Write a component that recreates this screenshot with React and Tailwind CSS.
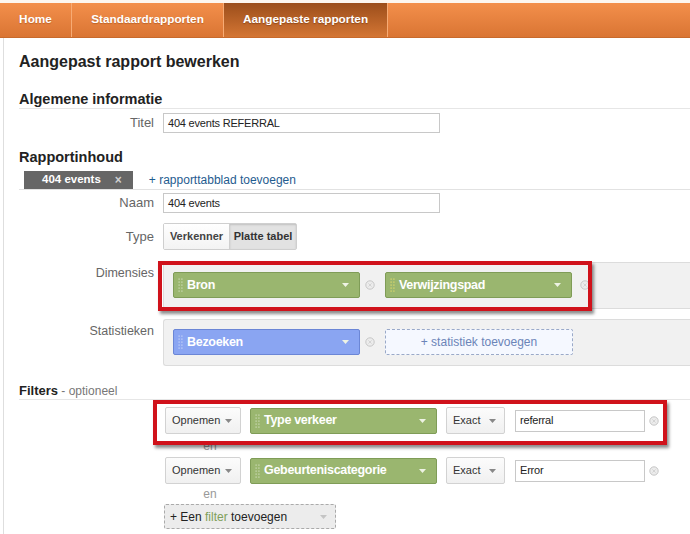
import React from 'react';

const RemoveIcon = () => (
  <svg width="10" height="10" viewBox="0 0 10 10" className="shrink-0">
    <circle cx="5" cy="5" r="4.2" fill="#ececec" stroke="#c6c6c6" strokeWidth="1" />
    <path d="M3.4 3.4 L6.6 6.6 M6.6 3.4 L3.4 6.6" stroke="#d0d0d0" strokeWidth="0.9" />
  </svg>
);

const Handle = ({ color = 'rgba(255,255,255,0.55)' }) => (
  <svg width="5" height="14" viewBox="0 0 5 14" className="shrink-0">
    {[1, 4, 7, 10, 13].map((y) => (
      <g key={y}>
        <rect x="0.5" y={y - 0.5} width="1.2" height="1.2" fill={color} />
        <rect x="3.3" y={y - 0.5} width="1.2" height="1.2" fill={color} />
      </g>
    ))}
  </svg>
);

const Caret = ({ color = '#eef3e4' }) => (
  <svg width="7" height="4" viewBox="0 0 7 4" className="shrink-0">
    <path d="M0 0 L7 0 L3.5 4 Z" fill={color} />
  </svg>
);

const Pill = ({ label, color = 'green', handle }) => {
  const tone =
    color === 'green'
      ? 'bg-[#9ab66f] border-[#7f9c57]'
      : 'bg-[#8aa5f2] border-[#6b86d6]';
  return (
    <div className={`w-[187px] h-[26px] ${tone} border rounded-[2px] flex items-center pl-[4px] pr-[10px] shrink-0`}>
      <Handle color={handle} />
      <span className="ml-[4px] text-white font-bold text-[12.5px] tracking-[-0.3px] flex-1">{label}</span>
      <Caret />
    </div>
  );
};

const SmallSelect = ({ label, w }) => (
  <div className={`${w} h-[27px] border border-[#d2d2d2] rounded-[2px] bg-linear-to-b from-[#fcfcfc] to-[#f0f0f0] flex items-center pl-[6px] pr-[8px] shrink-0`}>
    <span className="text-[11px] text-[#333] flex-1">{label}</span>
    <Caret color="#888" />
  </div>
);

const Label = ({ children, className = '' }) => (
  <div className={`w-[135px] shrink-0 text-right text-[12.5px] text-[#666] ${className}`}>{children}</div>
);

const TextBox = ({ value, w, h }) => (
  <div className={`${w} ${h} border border-[#c8c8c8] flex items-center px-[4px] text-[11px] tracking-[-0.2px] text-[#222]`}>
    {value}
  </div>
);

export default function App() {
  return (
    <div className="w-full h-[534px] overflow-hidden bg-white font-['Liberation_Sans',Arial,sans-serif]">
      {/* top navigation */}
      <div className="pt-[3px] bg-[#fdf6ef]">
        <div className="h-[35px] flex bg-linear-to-b from-[#f38f4b] to-[#da7533] border-b border-[#c86a2c] text-white font-bold text-[11.8px]">
          <div className="w-[72px] flex items-center justify-center border-r border-[#f7ab74] [text-shadow:0_1px_1px_rgba(120,50,0,0.35)]">
            Home
          </div>
          <div className="w-[152px] flex items-center justify-center border-r border-[#f7ab74] [text-shadow:0_1px_1px_rgba(120,50,0,0.35)]">
            Standaardrapporten
          </div>
          <div className="w-[164px] flex items-center justify-center border-r border-[#f7ab74] bg-linear-to-b from-[#9c4e1b] to-[#d47634] [text-shadow:0_1px_1px_rgba(80,30,0,0.4)]">
            Aangepaste rapporten
          </div>
        </div>
      </div>

      {/* content */}
      <div className="ml-[3px] border-l border-[#dedede] pl-[15px] pt-[14px] h-full">
        <h1 className="text-[16px] leading-[20px] font-bold text-[#222]">Aangepast rapport bewerken</h1>

        <div className="mt-[18px] leading-[18px] text-[14.5px] font-bold text-[#222] border-b border-[#e6e6e6]">
          Algemene informatie
        </div>
        <div className="mt-[4px] flex items-center gap-[9px]">
          <Label className="text-[13px]">Titel</Label>
          <TextBox value="404 events REFERRAL" w="w-[277px]" h="h-[20px]" />
        </div>

        <div className="mt-[15px] leading-[18px] text-[14.5px] font-bold text-[#222]">Rapportinhoud</div>
        <div className="mt-[5px] flex items-end border-b border-[#e2e2e2]">
          <div className="ml-[5px] h-[18px] bg-[#666] flex items-center pl-[18px] pr-[11px] gap-[14px]">
            <span className="text-white font-bold text-[11.5px]">404 events</span>
            <span className="text-[#cfcfcf] text-[12px] font-bold leading-none">×</span>
          </div>
          <div className="ml-[16px] h-[18px] flex items-center text-[12px] text-[#1f5c8f]">
            + rapporttabblad toevoegen
          </div>
        </div>
        <div className="mt-[3px] flex items-center gap-[9px]">
          <Label className="text-[13px]">Naam</Label>
          <TextBox value="404 events" w="w-[277px]" h="h-[20px]" />
        </div>
        <div className="mt-[10px] flex items-center gap-[9px]">
          <Label className="text-[13px]">Type</Label>
          <div className="h-[27px] flex border border-[#cfcfcf] rounded-[2px]">
            <div className="w-[66px] flex items-center justify-center bg-linear-to-b from-[#ffffff] to-[#f3f3f3] border-r border-[#cfcfcf] text-[11px] font-bold text-[#444]">
              Verkenner
            </div>
            <div className="w-[66px] flex items-center justify-center bg-[#e2e2e2] shadow-[inset_0_1px_2px_rgba(0,0,0,0.15)] text-[11px] font-bold text-[#333]">
              Platte tabel
            </div>
          </div>
        </div>

        {/* dimensions */}
        <div className="mt-[12px] flex gap-[9px]">
          <Label className="pt-[2px]">Dimensies</Label>
          <div className="relative flex-1 h-[47px] bg-[#f1f1f1] border border-[#dcdcdc] border-r-0 rounded-l-[3px] pt-[9px] pl-[9px] flex items-start gap-[5px]">
            <Pill label="Bron" />
            <div className="h-[26px] flex items-center"><RemoveIcon /></div>
            <div className="ml-[5px]">
              <Pill label="Verwijzingspad" handle="#e4dc6a" />
            </div>
            <div className="h-[26px] flex items-center ml-[3px]"><RemoveIcon /></div>
            <div className="absolute left-[-6px] top-[-2px] w-[434px] h-[50px] border-[4px] border-[#d0121b] shadow-[2px_3px_3px_rgba(0,0,0,0.45)]" />
          </div>
        </div>

        {/* metrics */}
        <div className="mt-[10px] flex gap-[9px]">
          <Label className="pt-[3px]">Statistieken</Label>
          <div className="flex-1 h-[47px] bg-[#f1f1f1] border border-[#dcdcdc] border-r-0 rounded-l-[3px] pt-[9px] pl-[9px] flex items-start gap-[5px]">
            <Pill label="Bezoeken" color="blue" />
            <div className="h-[26px] flex items-center"><RemoveIcon /></div>
            <div className="ml-[5px] w-[188px] h-[26px] border border-dashed border-[#9aa9c8] bg-[#f5f8ff] rounded-[2px] flex items-center justify-center text-[12px] text-[#6b84b8]">
              + statistiek toevoegen
            </div>
          </div>
        </div>

        {/* filters */}
        <div className="mt-[16px] leading-[16px] border-b border-[#e6e6e6]">
          <span className="text-[13px] font-bold text-[#222]">Filters</span>
          <span className="text-[12px] text-[#777]"> - optioneel</span>
        </div>

        <div className="ml-[146px] mt-[7px]">
          <div className="relative flex items-center">
            <SmallSelect label="Opnemen" w="w-[76px]" />
            <div className="ml-[9px]"><Pill label="Type verkeer" /></div>
            <div className="ml-[9px]"><SmallSelect label="Exact" w="w-[59px]" /></div>
            <div className="ml-[10px]"><TextBox value="referral" w="w-[130px]" h="h-[22px]" /></div>
            <div className="ml-[4px]"><RemoveIcon /></div>
            <div className="absolute left-[-12px] top-[-7px] w-[514px] h-[45px] border-[4px] border-[#d0121b] shadow-[2px_3px_3px_rgba(0,0,0,0.45)]" />
          </div>
          <div className="h-[23px] w-[90px] flex items-center justify-center text-[12px] text-[#999]">en</div>
          <div className="flex items-center">
            <SmallSelect label="Opnemen" w="w-[76px]" />
            <div className="ml-[9px]"><Pill label="Gebeurteniscategorie" /></div>
            <div className="ml-[9px]"><SmallSelect label="Exact" w="w-[59px]" /></div>
            <div className="ml-[10px]"><TextBox value="Error" w="w-[130px]" h="h-[22px]" /></div>
            <div className="ml-[4px]"><RemoveIcon /></div>
          </div>
          <div className="h-[20px] w-[90px] flex items-center justify-center text-[12px] text-[#999]">en</div>
          <div className="-ml-[1px] w-[172px] h-[25px] border border-dashed border-[#aaa] bg-[#ececec] rounded-[2px] flex items-center pl-[5px] pr-[8px]">
            <span className="flex-1 text-[12px] text-[#222]">
              + Een <span className="text-[#7f9f5a]">filter</span> toevoegen
            </span>
            <Caret color="#c4c4c4" />
          </div>
        </div>
      </div>
    </div>
  );
}
